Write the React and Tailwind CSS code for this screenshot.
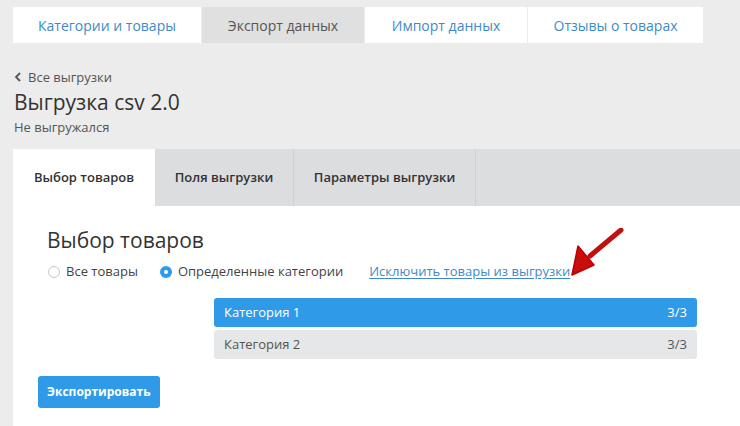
import React from 'react';

const font = { fontFamily: '"Open Sans", "Liberation Sans", sans-serif' };

function TopTab({ label, active, last }) {
  return (
    <div
      className={`flex items-center justify-center h-full text-[14px] ${
        active ? 'bg-[#e0e0e0] text-[#555]' : 'bg-white text-[#3f8ac6]'
      } ${last ? '' : 'border-r border-[#ececec]'}`}
    >
      {label}
    </div>
  );
}

function SubTab({ label, active, width }) {
  return (
    <div
      className={`flex items-center justify-center h-full text-[13px] font-semibold text-[#333] ${
        active ? 'bg-white' : 'bg-[#dcdddf] border-r border-[#cfd0d2]'
      } ${width}`}
    >
      {label}
    </div>
  );
}

function Radio({ checked, label }) {
  return (
    <label className="flex items-center gap-[6px] text-[13px] text-[#444]">
      {checked ? (
        <span className="w-[12px] h-[12px] rounded-full bg-[#2f9be8] flex items-center justify-center">
          <span className="w-[4px] h-[4px] rounded-full bg-white" />
        </span>
      ) : (
        <span className="w-[12px] h-[12px] rounded-full border border-[#c8c8c8] bg-white" />
      )}
      {label}
    </label>
  );
}

export default function App() {
  return (
    <div className="w-[740px] h-[426px] bg-[#ececec] overflow-hidden" style={font}>
      {/* верхние вкладки */}
      <div className="pt-[7px] pl-[13px]">
        <div className="grid grid-cols-[189px_163px_163px_175px] h-[36px] w-[690px]">
          <TopTab label="Категории и товары" />
          <TopTab label="Экспорт данных" active />
          <TopTab label="Импорт данных" />
          <TopTab label="Отзывы о товарах" last />
        </div>
      </div>

      <div className="pl-[14px] pt-[25px]">
        <div className="flex items-center gap-[6px] text-[13px] text-[#555] leading-[18px]">
          <svg width="8" height="10" viewBox="0 0 8 10">
            <path d="M6 1 L2 5 L6 9" fill="none" stroke="#555" strokeWidth="1.8" />
          </svg>
          Все выгрузки
        </div>
        <h1 className="text-[21px] leading-[28px] text-[#333] mt-[2px]">Выгрузка csv 2.0</h1>
        <p className="text-[13px] text-[#555] leading-[18px] mt-[2px]">Не выгружался</p>
      </div>

      {/* панель */}
      <div className="ml-[13px] mt-[13px] bg-white h-[280px]">
        <div className="flex h-[57px] bg-[#dcdddf]">
          <SubTab label="Выбор товаров" active width="w-[142px]" />
          <SubTab label="Поля выгрузки" width="w-[139px]" />
          <SubTab label="Параметры выгрузки" width="w-[182px]" />
        </div>

        <div className="relative pl-[34px] pt-[20px]">
          <h2 className="text-[21px] leading-[28px] text-[#333]">Выбор товаров</h2>
          <div className="flex items-center mt-[8px] pl-[1px] h-[20px]">
            <Radio label="Все товары" />
            <div className="ml-[22px]">
              <Radio checked label="Определенные категории" />
            </div>
            <a className="ml-[26px] text-[13px] text-[#3f8ac6] underline underline-offset-2">
              Исключить товары из выгрузки
            </a>
          </div>

          <svg
            className="absolute left-[545px] top-[22px]"
            width="70"
            height="52"
            viewBox="0 0 70 52"
          >
            <path d="M63 2 L32 28" stroke="#c21010" strokeWidth="5" strokeLinecap="round" />
            <path d="M20 18 L36 37 L14 47 Z" fill="#c80d0d" stroke="#b00" strokeWidth="1.5" strokeLinejoin="round" />
          </svg>

          <div className="ml-[167px] mt-[16px] w-[483px] flex flex-col gap-[3px]">
            <div className="flex justify-between items-center h-[29px] px-[10px] rounded-[3px] bg-[#2f9be8] text-white text-[13px]">
              <span>Категория 1</span>
              <span>3/3</span>
            </div>
            <div className="flex justify-between items-center h-[29px] px-[10px] rounded-[3px] bg-[#e6e7e8] text-[#555] text-[13px]">
              <span>Категория 2</span>
              <span>3/3</span>
            </div>
          </div>

          <button className="mt-[17px] -ml-[9px] h-[32px] px-[9px] rounded-[3px] bg-[#2f9be8] text-white text-[12px] font-bold">
            Экспортировать
          </button>
        </div>
      </div>
    </div>
  );
}
